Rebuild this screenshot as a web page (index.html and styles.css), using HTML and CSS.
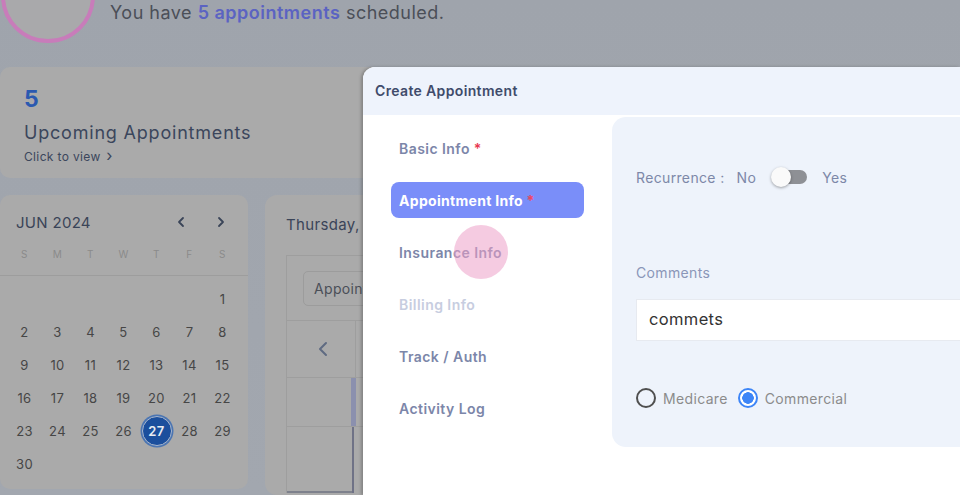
FILE: index.html
```html
<!DOCTYPE html>
<html lang="en">
<head>
<meta charset="utf-8">
<title>Appointments</title>
<link rel="stylesheet" href="styles.css">
</head>
<body>
<div class="page">
  <header class="greet">
    <div class="avatar"></div>
    <p class="greet-text">You have <strong>5 appointments</strong> scheduled.</p>
  </header>

  <section class="stat-card">
    <div class="stat-num">5</div>
    <div class="stat-title">Upcoming Appointments</div>
    <div class="stat-link">Click to view <span class="chev">&#x203A;</span></div>
  </section>

  <div class="main">
    <section class="calendar">
      <div class="cal-head">
        <span class="cal-month">JUN 2024</span>
        <span class="cal-nav">
          <svg viewBox="0 0 12 12" width="12" height="12"><path d="M8 2 L4 6 L8 10" fill="none" stroke="#3a4458" stroke-width="1.8" stroke-linecap="round" stroke-linejoin="round"/></svg>
          <svg viewBox="0 0 12 12" width="12" height="12"><path d="M4 2 L8 6 L4 10" fill="none" stroke="#3a4458" stroke-width="1.8" stroke-linecap="round" stroke-linejoin="round"/></svg>
        </span>
      </div>
      <div class="cal-week">
        <span>S</span><span>M</span><span>T</span><span>W</span><span>T</span><span>F</span><span>S</span>
      </div>
      <div class="cal-days">
        <span></span><span></span><span></span><span></span><span></span><span></span><span>1</span>
        <span>2</span><span>3</span><span>4</span><span>5</span><span>6</span><span>7</span><span>8</span>
        <span>9</span><span>10</span><span>11</span><span>12</span><span>13</span><span>14</span><span>15</span>
        <span>16</span><span>17</span><span>18</span><span>19</span><span>20</span><span>21</span><span>22</span>
        <span>23</span><span>24</span><span>25</span><span>26</span><span class="today"><b>27</b></span><span>28</span><span>29</span>
        <span>30</span>
      </div>
    </section>

    <section class="schedule">
      <div class="sch-title">Thursday, June 27</div>
      <div class="sch-grid">
        <div class="sch-row sch-filter">
          <div class="sch-select">Appointments</div>
        </div>
        <div class="sch-row sch-nav">
          <div class="sch-time">
            <svg viewBox="0 0 12 16" width="12" height="16"><path d="M9 2 L3 8 L9 14" fill="none" stroke="#5f6b82" stroke-width="2" stroke-linecap="round" stroke-linejoin="round"/></svg>
          </div>
          <div class="sch-col"></div>
        </div>
        <div class="sch-row sch-slot">
          <div class="sch-time"></div>
          <div class="sch-col sch-event"></div>
        </div>
        <div class="sch-row sch-slot tall">
          <div class="sch-time last"></div>
          <div class="sch-col dark"></div>
        </div>
      </div>
    </section>
  </div>
</div>

<div class="modal">
  <div class="modal-head">Create Appointment</div>
  <div class="modal-body">
    <nav class="steps">
      <a class="step">Basic Info <span class="req">*</span></a>
      <a class="step active">Appointment Info <span class="req">*</span></a>
      <a class="step ripple-host">Insurance Info<span class="ripple"></span></a>
      <a class="step disabled">Billing Info</a>
      <a class="step">Track / Auth</a>
      <a class="step">Activity Log</a>
    </nav>
    <div class="panel">
      <div class="recur">
        <span class="recur-label">Recurrence :</span>
        <span class="recur-opt">No</span>
        <span class="toggle"><span class="knob"></span></span>
        <span class="recur-opt">Yes</span>
      </div>
      <label class="field-label">Comments</label>
      <div class="input">commets</div>
      <div class="radios">
        <span class="radio"></span><span class="radio-label">Medicare</span>
        <span class="radio checked"></span><span class="radio-label">Commercial</span>
      </div>
    </div>
  </div>
</div>
</body>
</html>
```
FILE: styles.css
```css
* { box-sizing: border-box; }
html, body { margin: 0; padding: 0; }
body {
  width: 960px;
  height: 495px;
  overflow: hidden;
  background: linear-gradient(180deg, #9fa4ac 0%, #a2a7af 100%);
  font-family: "Inter", "Open Sans", sans-serif;
  letter-spacing: 0.35px;
  position: relative;
}

.page { padding: 0; }

/* greeting */
.greet {
  display: flex;
  align-items: flex-start;
  height: 67px;
}
.avatar {
  width: 94px;
  height: 94px;
  margin: -51px 0 0 1px;
  border-radius: 50%;
  border: 4px solid #c87cba;
  background: #a9a9ab;
  flex: none;
}
.greet-text {
  margin: 0 0 0 15px;
  font-size: 18px;
  letter-spacing: 0.5px;
  line-height: 26px;
  color: #4b4f58;
  font-weight: 400;
}
.greet-text strong { color: #5b63c2; font-weight: 600; }

/* stat card */
.stat-card {
  width: 420px;
  height: 111px;
  background: #aaaaaa;
  border-radius: 10px;
  padding: 18px 24px;
}
.stat-num {
  font-size: 23px;
  font-weight: 700;
  color: #2b59b0;
  line-height: 28px;
}
.stat-title {
  margin-top: 9px;
  font-size: 18px;
  letter-spacing: 0.8px;
  color: #3b465c;
  line-height: 22px;
}
.stat-link {
  margin-top: 3px;
  font-size: 12px;
  color: #3b465c;
  line-height: 16px;
}
.chev { font-size: 16px; margin-left: 2px; }

/* main row */
.main {
  display: flex;
  gap: 17px;
  margin-top: 17px;
}

.calendar {
  width: 248px;
  height: 294px;
  background: #aaaaaa;
  border-radius: 10px;
  flex: none;
}
.cal-head {
  display: flex;
  justify-content: space-between;
  align-items: center;
  padding: 14px 21px 0 16px;
  height: 40px;
}
.cal-month { font-size: 15px; color: #3a4458; letter-spacing: 0.3px; }
.cal-nav { display: flex; gap: 28px; }
.cal-nav svg { display: block; }
.cal-week, .cal-days {
  display: grid;
  grid-template-columns: repeat(7, 33px);
  padding-left: 8px;
}
.cal-week {
  height: 41px;
  align-items: center;
  border-bottom: 1.5px solid #9d9d9d;
  padding-bottom: 2px;
}
.cal-week span {
  text-align: center;
  font-size: 10px;
  color: #8b8b8b;
}
.cal-days { grid-auto-rows: 33px; padding-top: 6px; }
.cal-days span {
  display: flex;
  align-items: center;
  justify-content: center;
  font-size: 13px;
  color: #464646;
}
.cal-days .today b {
  width: 30px;
  height: 30px;
  border-radius: 50%;
  background: #1b4f9d;
  box-shadow: 0 0 0 1.5px #4b75b2;
  border: 1.5px solid #aab7cc;
  color: #e8ecf2;
  font-weight: 600;
  display: flex;
  align-items: center;
  justify-content: center;
}

/* schedule */
.schedule {
  width: 600px;
  height: 300px;
  background: #aaaaaa;
  border-radius: 12px;
  padding: 16px 0 0 21px;
}
.sch-title { font-size: 15px; color: #3a4458; line-height: 28px; }
.sch-grid {
  margin-top: 16px;
  border-left: 1px solid #9e9e9e;
  border-top: 1px solid #9e9e9e;
}
.sch-row { display: flex; border-bottom: 1px solid #9e9e9e; }
.sch-filter { height: 65px; padding: 15px 0 0 16px; }
.sch-select {
  width: 200px;
  height: 35px;
  border: 1px solid #9c9c9c;
  border-radius: 5px;
  font-size: 14px;
  color: #4b4f58;
  padding: 8px 10px;
}
.sch-nav { height: 57px; }
.sch-slot { height: 49px; }
.sch-slot.tall { height: 66px; border-bottom: none; }
.sch-time {
  width: 69px;
  border-right: 1px solid #9e9e9e;
  display: flex;
  align-items: center;
  padding-left: 30px;
}
.sch-time.last { border-bottom: 2px solid #7e818c; width: 65px; border-right: none; }
.sch-col { flex: 1; }
.sch-event { border-left: 5px solid #8b90ae; margin-left: -5px; }
.sch-col.dark { border-left: 2px solid #6f7286; }

/* modal */
.modal {
  position: absolute;
  left: 363px;
  top: 67px;
  width: 597px;
  height: 428px;
  background: #ffffff;
  border-top-left-radius: 12px;
  overflow: hidden;
  box-shadow: -2px 0 3px rgba(60, 60, 60, 0.35);
}
.modal-head {
  height: 48px;
  background: #eef3fc;
  padding: 14px 12px;
  font-size: 14px;
  font-weight: 600;
  color: #3f4b6b;
  line-height: 20px;
}
.modal-body { display: flex; }
.steps {
  width: 249px;
  flex: none;
  display: flex;
  flex-direction: column;
  gap: 16px;
  padding: 15px 28px 0 28px;
}
.step {
  display: block;
  position: relative;
  height: 36px;
  line-height: 38px;
  padding-left: 8px;
  border-radius: 8px;
  font-size: 14px;
  font-weight: 600;
  letter-spacing: 0.45px;
  color: #7c86a9;
}
.step .req { color: #e8384f; }
.step.active { background: #7a8ef9; color: #ffffff; font-weight: 700; letter-spacing: 0.3px; }
.step.active .req { color: #f04660; }
.step.disabled { color: #c7cde0; }
.ripple {
  position: absolute;
  left: 63px;
  top: -9px;
  width: 54px;
  height: 54px;
  border-radius: 50%;
  background: rgba(236, 160, 200, 0.55);
}
.panel {
  flex: 1;
  height: 330px;
  margin-top: 2px;
  background: #eef3fb;
  border-radius: 14px 0 0 14px;
  padding: 0 0 0 24px;
}
.recur {
  display: flex;
  align-items: center;
  height: 20px;
  margin-top: 50px;
  font-size: 14px;
  color: #7d88a8;
}
.recur-label { margin-right: 12px; }
.toggle {
  position: relative;
  width: 27px;
  height: 14px;
  border-radius: 7px;
  background: #8e9095;
  margin: 0 15px 0 24px;
}
.knob {
  position: absolute;
  left: -9px;
  top: -3px;
  width: 20px;
  height: 20px;
  border-radius: 50%;
  background: #fafafa;
  box-shadow: 0 1px 3px rgba(0,0,0,0.35);
}
.field-label {
  display: block;
  margin-top: 76px;
  font-size: 14px;
  color: #8a96b8;
  line-height: 20px;
}
.input {
  margin-top: 16px;
  height: 42px;
  background: #ffffff;
  border: 1px solid #e7eaf0;
  border-right: none;
  padding: 0 12px;
  font-size: 16.5px;
  line-height: 38px;
  color: #333333;
}
.radios {
  display: flex;
  align-items: center;
  margin-top: 47px;
  font-size: 14px;
  color: #8b8b8b;
}
.radio {
  width: 20px;
  height: 20px;
  border-radius: 50%;
  border: 2px solid #4f4f4f;
  margin-right: 7px;
  flex: none;
}
.radio.checked {
  border-color: #3d85f7;
  background: radial-gradient(circle, #3d85f7 0 5.5px, #ffffff 6px);
  margin-left: 10px;
}
.radio-label { color: #8b8b8b; }
```
